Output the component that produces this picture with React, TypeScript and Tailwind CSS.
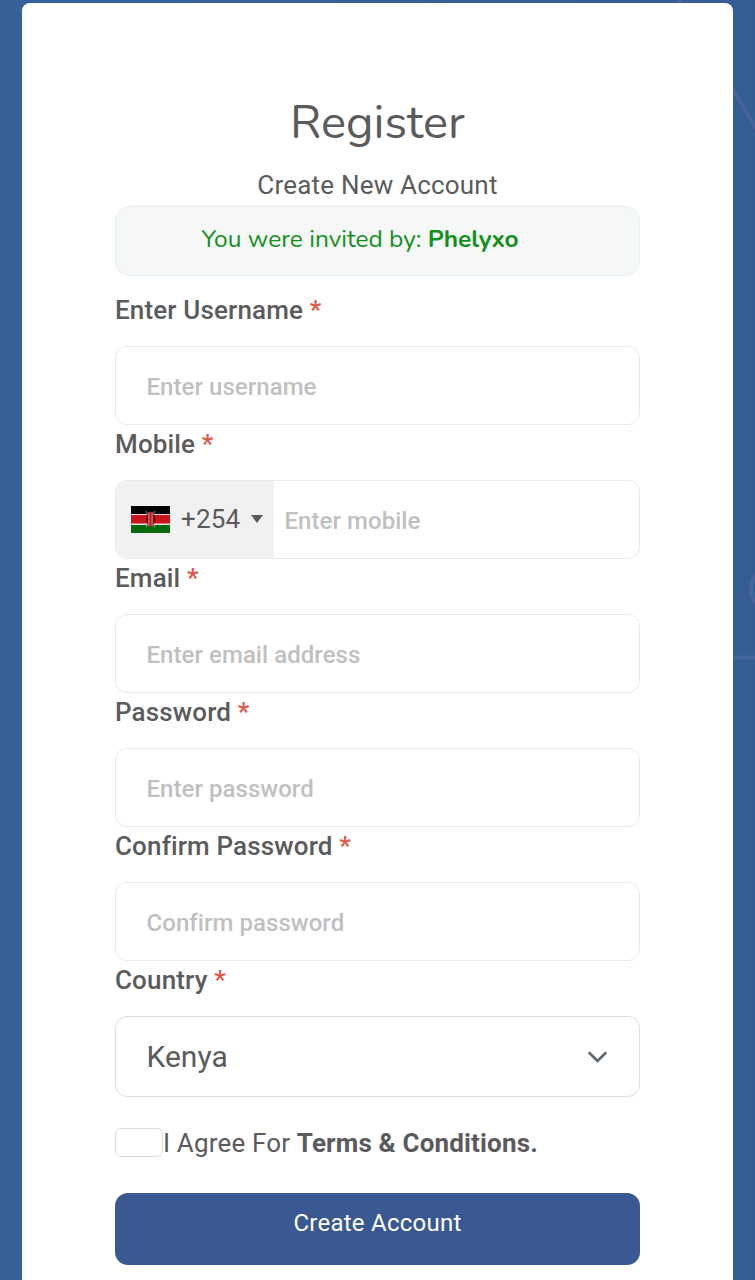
import React, { useState } from 'react';

interface FieldProps {
  label: string;
  children: React.ReactNode;
}

interface TextFieldProps {
  label: string;
  name: string;
  placeholder: string;
  type?: string;
}

const inputBox = 'w-full h-[79px] rounded-[12px] border border-[#e9eaed] bg-white';
const inputText =
  'text-[24px] font-medium tracking-[0.05px] text-[#5b5b5d] placeholder:text-[#c0c0c1] placeholder:opacity-100 focus:outline-none';

const Field: React.FC<FieldProps> = ({ label, children }) => (
  <div>
    <label className="block h-[55px] pt-px text-[26px] leading-[37px] font-medium tracking-[0.15px] text-[#5b5b5d]">
      {label} <span className="text-[#df5546]">*</span>
    </label>
    {children}
  </div>
);

const TextField: React.FC<TextFieldProps> = ({ label, name, placeholder, type = 'text' }) => (
  <Field label={label}>
    <input
      type={type}
      name={name}
      placeholder={placeholder}
      className={`${inputBox} ${inputText} block px-[30.5px] pt-[2px]`}
    />
  </Field>
);

const KenyaFlag = () => (
  <svg width="39" height="27" viewBox="0 0 39 27" className="shrink-0">
    <rect width="39" height="27" fill="#e8dcdc" />
    <rect width="39" height="8" fill="#000" />
    <rect y="9" width="39" height="8.5" fill="#c8141c" />
    <rect y="19" width="39" height="8" fill="#066a0c" />
    <path d="M15 5l9 16M24 5l-9 16" stroke="#c9b5b5" strokeWidth="0.8" />
    <ellipse cx="19.5" cy="13.2" rx="4.3" ry="7.6" fill="#8d0d12" />
    <path d="M16.2 8.5q-1.8 4.7 0 9.4zM22.8 8.5q1.8 4.7 0 9.4z" fill="#1d0505" />
    <path d="M18 6.5v13.5M21 6.5v13.5" stroke="#efc6c6" strokeWidth="0.9" />
    <path d="M19.5 6v14.5" stroke="#c8141c" strokeWidth="1.6" />
  </svg>
);

// faint line art behind the card
const Backdrop = () => (
  <svg
    className="absolute inset-0"
    width="755"
    height="1280"
    viewBox="0 0 755 1280"
    fill="none"
    stroke="#46649d"
    strokeWidth="4"
  >
    <path d="M675 -6L760 135" />
    <circle cx="775" cy="589" r="24" />
    <path d="M700 657.5h60" />
  </svg>
);

const App: React.FC = () => {
  const [country, setCountry] = useState('Kenya');
  const [agreed, setAgreed] = useState(false);

  return (
    <div className="relative h-[1280px] w-full overflow-hidden bg-linear-to-r from-[#376299] to-[#355d95] font-['Roboto',sans-serif] text-[#5b5b5d]">
      <Backdrop />
      <div className="relative mx-[22px] mt-[3px] h-[1300px] rounded-[8px] bg-white px-[93px] pt-[88px]">
        {/* Title */}
        <h1 className="text-center font-['Nunito','Noto_Sans',sans-serif] text-[47px] leading-[64px] font-normal">
          Register
        </h1>
        <p className="mt-[11px] h-[40px] text-center text-[26px] leading-[38px] tracking-[0.2px]">
          Create New Account
        </p>

        {/* Referral notice */}
        <div className="mb-[15px] h-[70px] rounded-[15px] border border-[#e4f0ed] bg-[#f6f7f7] pr-[35px] text-center font-['Nunito','Noto_Sans',sans-serif] text-[24.5px] leading-[65px] whitespace-nowrap text-[#11901a]">
          You were invited by: <span className="font-bold">Phelyxo</span>
        </div>

        <form onSubmit={(e) => e.preventDefault()}>
          <TextField label="Enter Username" name="username" placeholder="Enter username" />

          <Field label="Mobile">
            <div className={`${inputBox} flex overflow-hidden`}>
              <button type="button" className="flex w-[158px] shrink-0 items-center bg-[#f1f1f2] pl-[15px] pb-px">
                <KenyaFlag />
                <span className="ml-[11px] text-[26px] tracking-[0.2px]">+254</span>
                <span className="ml-[11px] border-x-[6px] border-t-[8px] border-x-transparent border-t-[#5b5b5d]" />
              </button>
              <input
                type="tel"
                name="mobile"
                placeholder="Enter mobile"
                className={`${inputText} min-w-0 flex-1 px-[10.5px] pt-[2px]`}
              />
            </div>
          </Field>

          <TextField label="Email" name="email" type="email" placeholder="Enter email address" />
          <TextField label="Password" name="password" type="password" placeholder="Enter password" />
          <TextField label="Confirm Password" name="confirm" type="password" placeholder="Confirm password" />

          <Field label="Country">
            <div className="flex h-[81px] items-center rounded-[12px] border border-[#dcdee1] pr-[31px] pl-[30.5px]">
              <select
                value={country}
                onChange={(e) => setCountry(e.target.value)}
                className="flex-1 appearance-none bg-transparent text-[30px] focus:outline-none"
              >
                <option>Kenya</option>
                <option>Uganda</option>
                <option>Tanzania</option>
              </select>
              <svg width="21" height="14" viewBox="0 0 21 14" fill="none" className="shrink-0">
                <path d="M2.5 3l8 8 8-8" stroke="#5f6972" strokeWidth="2.6" strokeLinecap="round" strokeLinejoin="round" />
              </svg>
            </div>
          </Field>

          <div className="mt-[30px] flex h-[30px] items-center">
            <input
              type="checkbox"
              checked={agreed}
              onChange={(e) => setAgreed(e.target.checked)}
              className="h-[29px] w-[48px] shrink-0 appearance-none rounded-[6px] border border-[#dcdee1] bg-white checked:bg-[#3a5892]"
            />
            <span className="pt-[2px] text-[26px] leading-[30px] tracking-[0.16px] whitespace-nowrap">
              I Agree For <span className="font-bold">Terms &amp; Conditions.</span>
            </span>
          </div>

          <button
            type="submit"
            className="mt-[36px] block h-[72px] w-full rounded-[13px] bg-[#3a5892] pb-[12px] text-[24px] tracking-[0.25px] text-white"
          >
            Create Account
          </button>
        </form>
      </div>
    </div>
  );
};

export default App;
